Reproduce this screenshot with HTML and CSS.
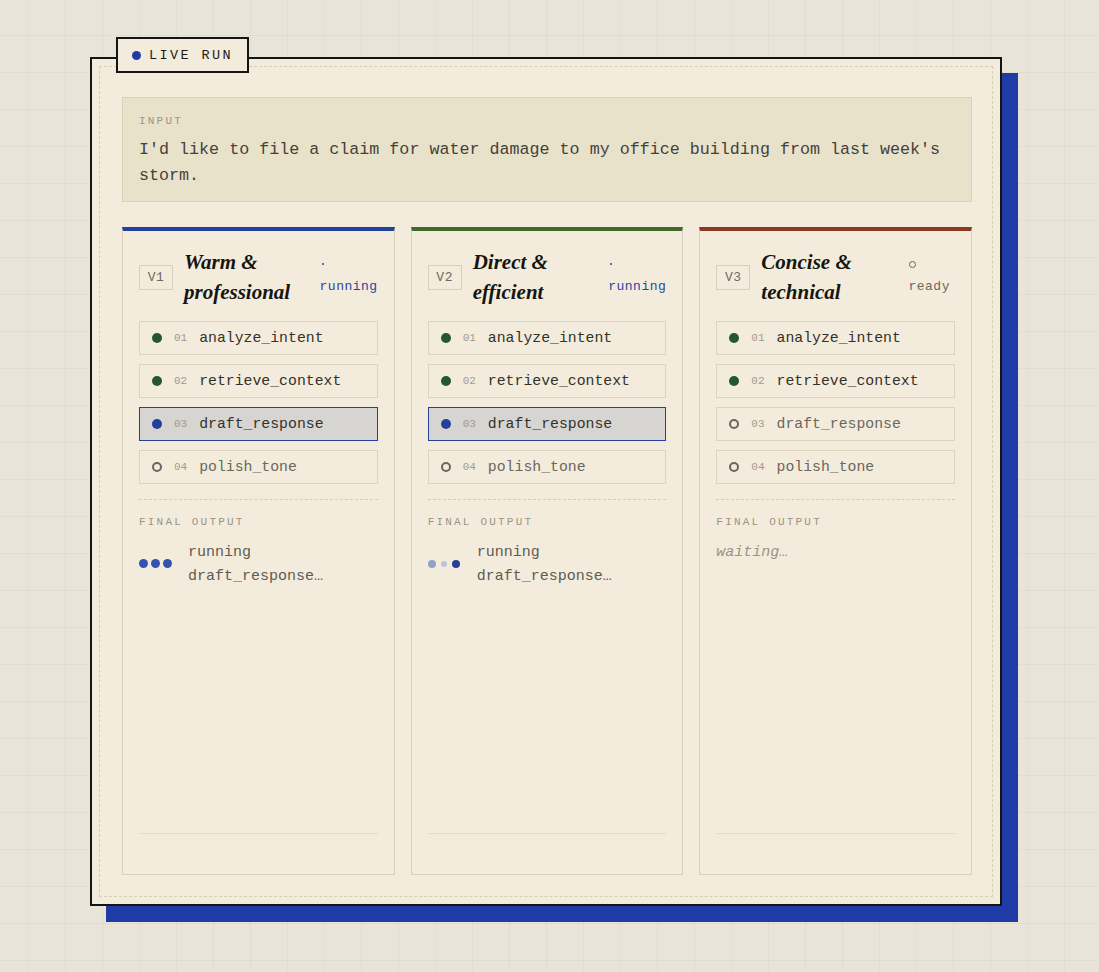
FILE: index.html
```html
<!DOCTYPE html>
<html lang="en">
<head>
<meta charset="utf-8">
<title>Live Run</title>
<link rel="stylesheet" href="styles.css">
</head>
<body>
<main class="card">
  <div class="badge"><span class="badge-dot"></span><span class="badge-text">LIVE RUN</span></div>
  <section class="input">
    <div class="label">INPUT</div>
    <p class="input-text">I'd like to file a claim for water damage to my office building from last week's storm.</p>
  </section>
  <section class="cols">
    <article class="col col-blue">
      <header class="col-head">
        <span class="ver">V1</span>
        <h2 class="title">Warm &amp; professional</h2>
        <div class="status running"><span class="s-dot"></span><span>running</span></div>
      </header>
      <ul class="steps">
        <li class="step done"><span class="dot"></span><span class="num">01</span><span class="name">analyze_intent</span></li>
        <li class="step done"><span class="dot"></span><span class="num">02</span><span class="name">retrieve_context</span></li>
        <li class="step active"><span class="dot"></span><span class="num">03</span><span class="name">draft_response</span></li>
        <li class="step pending"><span class="dot"></span><span class="num">04</span><span class="name">polish_tone</span></li>
      </ul>
      <div class="final">
        <div class="label">FINAL OUTPUT</div>
        <div class="out">
          <span class="dots"><i class="d"></i><i class="d"></i><i class="d"></i></span>
          <span class="out-text">running draft_response…</span>
        </div>
      </div>
      <footer class="col-foot"></footer>
    </article>
    <article class="col col-green">
      <header class="col-head">
        <span class="ver">V2</span>
        <h2 class="title">Direct &amp; efficient</h2>
        <div class="status running"><span class="s-dot"></span><span>running</span></div>
      </header>
      <ul class="steps">
        <li class="step done"><span class="dot"></span><span class="num">01</span><span class="name">analyze_intent</span></li>
        <li class="step done"><span class="dot"></span><span class="num">02</span><span class="name">retrieve_context</span></li>
        <li class="step active"><span class="dot"></span><span class="num">03</span><span class="name">draft_response</span></li>
        <li class="step pending"><span class="dot"></span><span class="num">04</span><span class="name">polish_tone</span></li>
      </ul>
      <div class="final">
        <div class="label">FINAL OUTPUT</div>
        <div class="out">
          <span class="dots dots-b"><i class="d d1"></i><i class="d d2"></i><i class="d d3"></i></span>
          <span class="out-text">running draft_response…</span>
        </div>
      </div>
      <footer class="col-foot"></footer>
    </article>
    <article class="col col-rust">
      <header class="col-head">
        <span class="ver">V3</span>
        <h2 class="title">Concise &amp; technical</h2>
        <div class="status ready"><span class="s-dot"></span><span>ready</span></div>
      </header>
      <ul class="steps">
        <li class="step done"><span class="dot"></span><span class="num">01</span><span class="name">analyze_intent</span></li>
        <li class="step done"><span class="dot"></span><span class="num">02</span><span class="name">retrieve_context</span></li>
        <li class="step pending"><span class="dot"></span><span class="num">03</span><span class="name">draft_response</span></li>
        <li class="step pending"><span class="dot"></span><span class="num">04</span><span class="name">polish_tone</span></li>
      </ul>
      <div class="final">
        <div class="label">FINAL OUTPUT</div>
        <div class="out">
          <span class="waiting">waiting…</span>
        </div>
      </div>
      <footer class="col-foot"></footer>
    </article>
  </section>
</main>
</body>
</html>
```
FILE: styles.css
```css
* { box-sizing: border-box; }
html, body { margin: 0; padding: 0; }
body {
  background-color: #e8e4d8;
  background-image:
    linear-gradient(to right, rgba(120, 110, 80, 0.055) 1px, transparent 1px),
    linear-gradient(to bottom, rgba(120, 110, 80, 0.055) 1px, transparent 1px);
  background-size: 37px 37px;
  background-position: 28px 35px;
  min-height: 972px;
  font-family: "Liberation Mono", "DejaVu Sans Mono", monospace;
  color: #2f2c27;
  padding: 57px 0 0 90px;
}
.card {
  position: relative;
  width: 912px;
  background: #f3ecdc;
  border: 2px solid #141414;
  box-shadow: 16px 16px 0 #1f3ca6;
  padding: 38px 28px 29px 30px;
  outline: 1px dashed #d6ceb6;
  outline-offset: -10px;
}
.badge {
  position: absolute;
  top: -22px;
  left: 24px;
  height: 36px;
  display: flex;
  align-items: center;
  gap: 8px;
  padding: 0 14px 0 14px;
  background: #f3ecdc;
  border: 2px solid #141414;
}
.badge-dot {
  width: 9px; height: 9px;
  border-radius: 50%;
  background: #1f3ca6;
}
.badge-text {
  font-size: 13.5px;
  letter-spacing: 2.4px;
  color: #1c1b18;
}
.label {
  font-size: 11px;
  letter-spacing: 2.2px;
  line-height: 13px;
  color: #9a9484;
}
.input {
  background: #e9e2cb;
  border: 1px solid #d9d1b8;
  padding: 17px 16px 12px 16px;
}
.input-text {
  margin: 9px 0 0 0;
  font-size: 16.7px;
  line-height: 26px;
  color: #45413a;
}
.cols {
  margin-top: 25px;
  display: grid;
  grid-template-columns: repeat(3, 1fr);
  gap: 16px;
}
.col {
  min-height: 648px;
  display: flex;
  flex-direction: column;
  border: 1px solid #d8d0bb;
  border-top: 4px solid #23409a;
  padding: 16px 16px 0 16px;
}
.col-green { border-top-color: #3f6a2b; }
.col-rust { border-top-color: #8a3b1f; }
.col-head {
  display: flex;
  align-items: center;
  gap: 11px;
  height: 60px;
}
.ver {
  flex: none;
  width: 34px; height: 25px;
  display: flex; align-items: center; justify-content: center;
  border: 1px solid #d8d0bb;
  font-size: 13px;
  letter-spacing: 0.5px;
  color: #6f6a60;
}
.title {
  flex: 1;
  margin: 0;
  font-family: "Liberation Serif", "DejaVu Serif", serif;
  font-style: italic;
  font-weight: 700;
  font-size: 21px;
  line-height: 30px;
  color: #16150f;
}
.status {
  flex: none;
  display: flex;
  flex-direction: column;
  align-items: flex-start;
  font-size: 13px;
  letter-spacing: 0.5px;
  line-height: 21px;
  padding-top: 2px;
}
.status.running { color: #2a44a0; }
.status.ready { color: #6b665c; margin-right: 5px; }
.s-dot {
  height: 8px;
  margin: 0 0 8px 1px;
  display: block;
}
.running .s-dot {
  width: 2px; height: 2px; margin: 3px 0 11px 2px;
  background: #2a44a0; border-radius: 50%;
}
.ready .s-dot {
  width: 7px; height: 7px; margin: 1px 0 8px 1px;
  border: 1.3px solid #6b665c; border-radius: 50%;
}
.steps {
  list-style: none;
  margin: 14px 0 0 0;
  padding: 0;
  display: flex;
  flex-direction: column;
  gap: 9px;
}
.step {
  height: 34px;
  display: flex;
  align-items: center;
  padding: 0 12px;
  border: 1px solid #dcd4bf;
}
.dot {
  width: 10px; height: 10px;
  border-radius: 50%;
  flex: none;
}
.num {
  margin-left: 12px;
  font-size: 11px;
  color: #a19b8f;
}
.name {
  margin-left: 12px;
  font-size: 14.8px;
  color: #34312b;
}
.done .dot { background: #24572f; }
.active { background: #d6d5d1; border-color: #23409a; }
.active .dot { background: #23409a; }
.pending .dot { border: 2px solid #6b665c; }
.pending .name { color: #6b665c; }
.final {
  margin-top: 15px;
  border-top: 1px dashed #d5cdb6;
  padding-top: 16px;
}
.out {
  margin-top: 12px;
  display: flex;
  align-items: center;
  gap: 12px;
}
.dots {
  display: flex;
  align-items: center;
  gap: 3px;
  flex: none;
  width: 37px;
  margin-top: -3px;
}
.d {
  width: 9px; height: 9px; border-radius: 50%;
  background: #3552b0;
  display: block;
}
.dots-b { gap: 5px; }
.d1 { width: 8px; height: 8px; background: #93a0c9; }
.d2 { width: 6px; height: 6px; background: #bfc5d8; }
.d3 { width: 8px; height: 8px; background: #23409a; }
.out-text {
  font-size: 15px;
  line-height: 24px;
  color: #5f5a52;
  width: 160px;
}
.waiting {
  font-size: 15px;
  line-height: 24px;
  font-style: italic;
  color: #9a9484;
}
.col-foot {
  margin-top: auto;
  border-top: 1px solid #e2dac6;
  height: 41px;
}
```
